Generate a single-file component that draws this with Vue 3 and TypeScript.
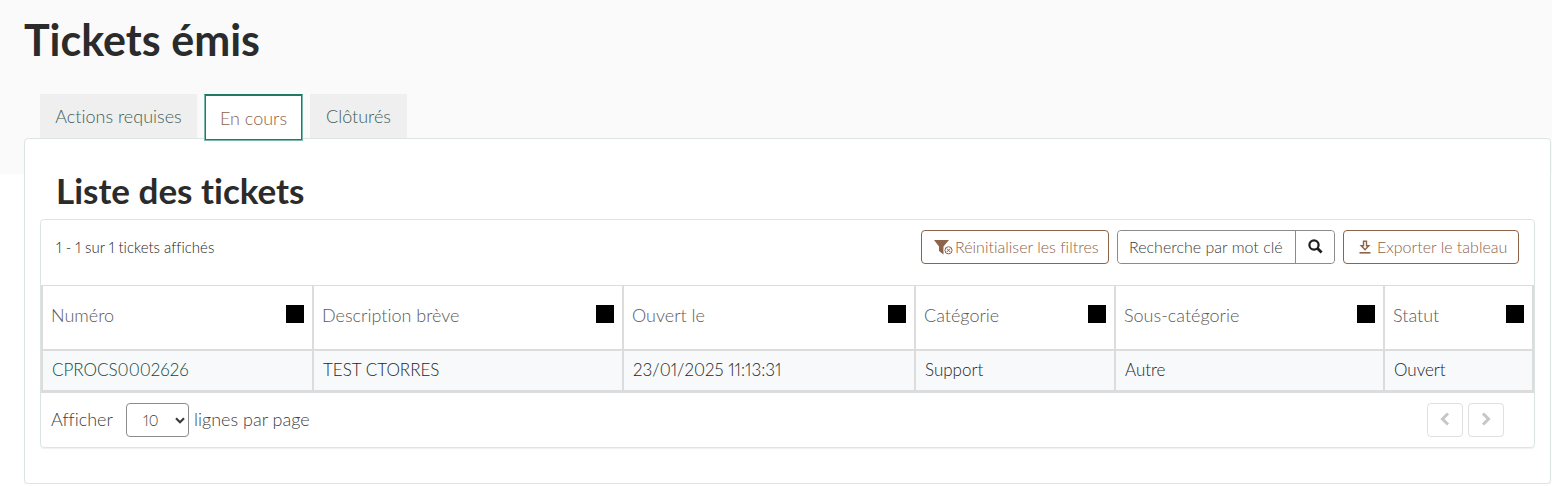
<script setup lang="ts">
import { ref } from 'vue'

interface Column {
  key: string
  label: string
  cls: string
}

const tabs = ['Actions requises', 'En cours', 'Clôturés']
const activeTab = ref('En cours')
const search = ref('')
const pageSize = ref(10)

const columns: Column[] = [
  { key: 'number', label: 'Numéro', cls: 'c-number' },
  { key: 'short', label: 'Description brève', cls: 'c-short' },
  { key: 'opened', label: 'Ouvert le', cls: 'c-opened' },
  { key: 'category', label: 'Catégorie', cls: 'c-category' },
  { key: 'sub', label: 'Sous-catégorie', cls: 'c-sub' },
  { key: 'status', label: 'Statut', cls: 'c-status' },
]

const tickets: Record<string, string>[] = [
  {
    number: 'CPROCS0002626',
    short: 'TEST CTORRES',
    opened: '23/01/2025 11:13:31',
    category: 'Support',
    sub: 'Autre',
    status: 'Ouvert',
  },
]
</script>

<template>
  <main class="page">
    <header class="banner">
      <h1>Tickets émis</h1>
      <nav class="tabs" role="tablist">
        <button
          v-for="tab in tabs"
          :key="tab"
          type="button"
          role="tab"
          class="tab"
          :class="{ active: tab === activeTab }"
          :aria-selected="tab === activeTab"
          @click="activeTab = tab"
        >{{ tab }}</button>
      </nav>
    </header>

    <section class="panel">
      <h2>Liste des tickets</h2>
      <div class="list">
        <div class="toolbar">
          <p class="count">1 - 1 sur 1 tickets affichés</p>
          <button type="button" class="btn reset">
            <svg width="19" height="16" viewBox="0 0 19 16" aria-hidden="true">
              <path d="M0 1h15L9.500 7.500V15.500L5 12V7.500Z" fill="#8d6449" />
              <circle cx="14.500" cy="11.300" r="4.800" fill="#fff" />
              <circle cx="14.500" cy="11.300" r="3.600" fill="none" stroke="#8d6449" stroke-width="1" />
              <path d="M12.800 9.600l3.400 3.400M16.200 9.600l-3.400 3.400" stroke="#8d6449" stroke-width="1" />
            </svg>
            <span>Réinitialiser les filtres</span>
          </button>
          <form class="search" role="search" @submit.prevent>
            <input v-model="search" type="text" aria-label="Recherche par mot clé" placeholder="Recherche par mot clé">
            <button type="submit" aria-label="Rechercher">
              <svg width="15" height="15" viewBox="0 0 15 15" fill="none" stroke="#1e1e1e" aria-hidden="true">
                <circle cx="6" cy="6" r="4.600" stroke-width="2.200" />
                <path d="M9.300 9.300l4.300 4.200" stroke-width="2.800" />
              </svg>
            </button>
          </form>
          <button type="button" class="btn export">
            <svg width="12" height="14" viewBox="0 0 12 14" fill="none" stroke="#8d6449" aria-hidden="true">
              <path d="M4.500 1.200h3v4.600h2.300L6 9.700 2.200 5.800h2.300z" stroke-width="1.400" />
              <path d="M0.500 12.800h11" stroke-width="1.600" />
            </svg>
            <span>Exporter le tableau</span>
          </button>
        </div>

        <table>
          <colgroup>
            <col v-for="col in columns" :key="col.key" :class="col.cls">
          </colgroup>
          <thead>
            <tr>
              <th v-for="col in columns" :key="col.key" scope="col">
                <div class="head">
                  <span>{{ col.label }}</span>
                  <button type="button" class="filter" :aria-label="'Filtrer : ' + col.label"></button>
                </div>
              </th>
            </tr>
          </thead>
          <tbody>
            <tr v-for="ticket in tickets" :key="ticket.number">
              <td v-for="col in columns" :key="col.key">
                <a v-if="col.key === 'number'" href="#">{{ ticket[col.key] }}</a>
                <template v-else>{{ ticket[col.key] }}</template>
              </td>
            </tr>
          </tbody>
        </table>

        <footer class="footer">
          <label for="page-size">Afficher</label>
          <div class="size">
            <select id="page-size" v-model="pageSize">
              <option :value="10">10</option>
              <option :value="20">20</option>
              <option :value="50">50</option>
            </select>
            <svg width="10" height="7" viewBox="0 0 10 7" fill="none" stroke="#3a3a3a" stroke-width="2.200" aria-hidden="true">
              <path d="M1 1.200l4 4 4-4" />
            </svg>
          </div>
          <span class="per-page">lignes par page</span>
          <div class="pager">
            <button type="button" disabled aria-label="Page précédente">
              <svg width="12" height="14" viewBox="0 0 12 14" fill="none" stroke="#c6c6c6" stroke-width="3" aria-hidden="true">
                <path d="M9 1.500L3.500 7 9 12.500" />
              </svg>
            </button>
            <button type="button" disabled aria-label="Page suivante">
              <svg width="12" height="14" viewBox="0 0 12 14" fill="none" stroke="#c6c6c6" stroke-width="3" aria-hidden="true">
                <path d="M3 1.500L8.500 7 3 12.500" />
              </svg>
            </button>
          </div>
        </footer>
      </div>
    </section>
  </main>
</template>

<style>
body {
  margin: 0;
  background: #fff;
}
</style>

<style scoped>
* {
  box-sizing: border-box;
}

.page {
  font-family: Lato, "Open Sans", sans-serif;
  font-size: 18px;
  font-weight: 300;
  font-variant-ligatures: none;
  font-variant-numeric: proportional-nums;
  line-height: 24px;
  color: #1e1e1e;
}

button,
input,
select {
  font: inherit;
  font-variant-ligatures: none;
  font-variant-numeric: proportional-nums;
  color: inherit;
  margin: 0;
}

svg {
  flex-shrink: 0;
}

.banner {
  background: #fafafa;
  padding: 16px 24px 36px;
}

h1,
h2 {
  margin: 0;
  font-weight: 700;
  color: #2b2b2b;
}

h1 {
  font-size: 43px;
  line-height: 48px;
}

.tabs {
  display: grid;
  grid-template-columns: 157px 99px 97px;
  column-gap: 7px;
  height: 44px;
  padding-left: 16px;
  margin-top: 30px;
}

.tab {
  position: relative;
  height: 44px;
  padding: 0;
  border: 0;
  background: #efefef;
  color: #3f5f59;
  white-space: nowrap;
}

.tab.active {
  z-index: 1;
  height: 47px;
  background: #fff;
  border: 1px solid #7cb8ac;
  border-top-color: #1f7a68;
  box-shadow: inset 0 0 0 1px #1f7a68;
  color: #8d6449;
}

.panel {
  margin: -36px 1px 0 24px;
  padding: 32px 15px 35px;
  background: #fff;
  border: 1px solid #dde5e2;
  border-radius: 4px;
  box-shadow: 0 1px 1px #eef2f0;
}

h2 {
  padding-left: 16px;
  font-size: 35px;
  line-height: 38px;
  margin-bottom: 10px;
}

.list {
  border: 1px solid #dde5e2;
  border-radius: 4px;
  box-shadow: 0 1px 1px #eef2f0;
}

.toolbar {
  display: flex;
  align-items: center;
  gap: 8px;
  padding: 10px 15px 21px;
  font-size: 16px;
}

.count {
  margin: 0 auto 0 0;
  font-size: 15px;
}

.btn {
  display: flex;
  align-items: center;
  height: 34px;
  padding: 0 8px 0 12px;
  background: #fff;
  border: 1px solid #8d6449;
  border-radius: 4px;
  color: #8d6449;
  white-space: nowrap;
}

.reset {
  width: 188px;
  gap: 2px;
}

.export {
  width: 176px;
  padding-left: 15px;
  gap: 6px;
}

.search {
  display: flex;
  width: 218px;
  height: 34px;
  border: 1px solid #8b8b8b;
  border-radius: 4px;
}

.search input {
  flex: 1;
  min-width: 0;
  padding: 0 0 0 11px;
  border: 0;
  border-radius: 4px;
  background: #fff;
}

.search input::placeholder {
  color: #3a3a3a;
  opacity: 1;
}

.search button {
  display: flex;
  align-items: center;
  justify-content: center;
  width: 39px;
  padding: 0 0 2px;
  border: 0;
  border-left: 1px solid #8b8b8b;
  border-radius: 0 4px 4px 0;
  background: #fff;
}

table {
  width: 100%;
  table-layout: fixed;
  border-collapse: separate;
  border-spacing: 0;
  border-left: 2px solid #dcdcdc;
  border-bottom: 1px solid #dcdcdc;
}

.c-number { width: 271px; }
.c-short { width: 310px; }
.c-opened { width: 292px; }
.c-category { width: 200px; }
.c-sub { width: 269px; }
.c-status { width: 149px; }

th,
td {
  padding: 0 8px;
  border-right: 2px solid #dcdcdc;
  border-bottom: 2px solid #dcdcdc;
  text-align: left;
  font-weight: 300;
}

th {
  height: 66px;
  border-top: 1px solid #dcdcdc;
  color: #5a5a5a;
}

td {
  height: 41px;
  padding: 0 8px 1px 9px;
  background: #f7f9fb;
  font-size: 17px;
}

td a {
  color: #0c483f;
  text-decoration: none;
}

.head {
  display: flex;
  align-items: center;
  justify-content: space-between;
  padding-bottom: 7px;
}

.head span {
  padding-top: 2px;
}

.filter {
  width: 18px;
  height: 18px;
  padding: 0;
  border: 0;
  background: #000;
}

.footer {
  display: flex;
  align-items: center;
  padding: 10px 30px 10px 10px;
  color: #404040;
}

.footer label {
  width: 75px;
}

.footer label,
.per-page {
  padding-bottom: 2px;
}

.size {
  position: relative;
  width: 63px;
  height: 34px;
}

.size select {
  appearance: none;
  width: 100%;
  height: 100%;
  padding: 0 16px;
  border: 1px solid #8b8b8b;
  border-radius: 4px;
  background: #fff;
  font-size: 15px;
}

.size svg {
  position: absolute;
  right: 4px;
  top: 14px;
  pointer-events: none;
}

.per-page {
  padding-left: 5px;
}

.pager {
  display: flex;
  gap: 5px;
  margin-left: auto;
}

.pager button {
  display: flex;
  align-items: center;
  justify-content: center;
  width: 36px;
  height: 34px;
  padding: 0 0 2px;
  border: 1px solid #e0e0e0;
  border-radius: 4px;
  background: #fff;
}
</style>
